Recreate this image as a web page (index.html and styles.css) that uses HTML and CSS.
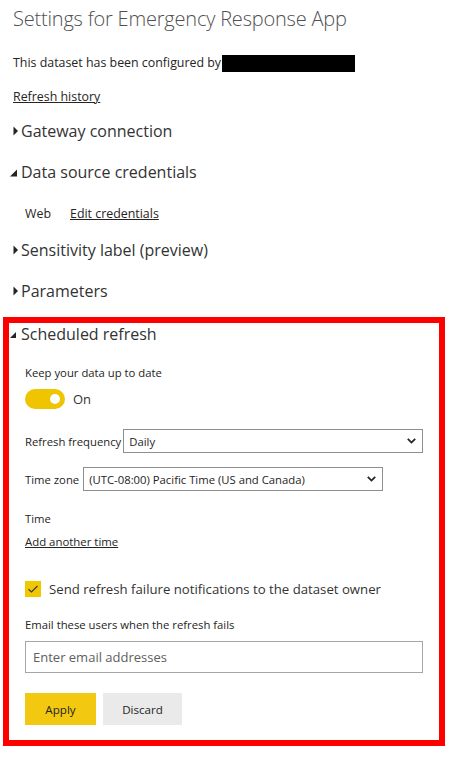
FILE: index.html
```html
<!DOCTYPE html>
<html lang="en">
<head>
<meta charset="utf-8">
<title>Settings for Emergency Response App</title>
<link rel="stylesheet" href="styles.css">
</head>
<body>
<div class="page">
  <h1 class="title">Settings for Emergency Response App</h1>
  <p class="configured">This dataset has been configured by <span class="redacted"></span></p>
  <a class="link history" href="#">Refresh history</a>

  <div class="section-head sh-gateway">
    <span class="caret"><svg width="8" height="10" viewBox="0 0 8 10"><path d="M3.5 0.5 L8 5 L3.5 9.5 Z" fill="#252423"/></svg></span>
    <span>Gateway connection</span>
  </div>

  <div class="section-head sh-source">
    <span class="caret"><svg width="8" height="10" viewBox="0 0 8 10"><path d="M0 9.5 L7 9.5 L7 2.5 Z" fill="#252423"/></svg></span>
    <span>Data source credentials</span>
  </div>
  <div class="cred-row">
    <span class="cred-type">Web</span>
    <a class="link" href="#">Edit credentials</a>
  </div>

  <div class="section-head sh-sens">
    <span class="caret"><svg width="8" height="10" viewBox="0 0 8 10"><path d="M3.5 0.5 L8 5 L3.5 9.5 Z" fill="#252423"/></svg></span>
    <span>Sensitivity label (preview)</span>
  </div>

  <div class="section-head sh-params">
    <span class="caret"><svg width="8" height="10" viewBox="0 0 8 10"><path d="M3.5 0.5 L8 5 L3.5 9.5 Z" fill="#252423"/></svg></span>
    <span>Parameters</span>
  </div>

  <div class="highlight">
    <div class="section-head sh-sched">
      <span class="caret"><svg width="8" height="10" viewBox="0 0 8 10"><path d="M0 9 L6 9 L6 3 Z" fill="#252423"/></svg></span>
      <span>Scheduled refresh</span>
    </div>
    <div class="sched-body">
      <div class="keep">Keep your data up to date</div>
      <div class="toggle-row">
        <span class="toggle"><span class="knob"></span></span>
        <span class="toggle-label">On</span>
      </div>

      <div class="field-row freq">
        <span class="field-label">Refresh frequency</span>
        <span class="select">
          <span class="select-text">Daily</span>
          <svg class="chev" width="9" height="6" viewBox="0 0 9 6"><path d="M0.8 0.9 L4.5 4.6 L8.2 0.9" fill="none" stroke="#252423" stroke-width="1.8"/></svg>
        </span>
      </div>

      <div class="field-row tz">
        <span class="field-label tz-label">Time zone</span>
        <span class="select">
          <span class="select-text">(UTC-08:00) Pacific Time (US and Canada)</span>
          <svg class="chev" width="9" height="6" viewBox="0 0 9 6"><path d="M0.8 0.9 L4.5 4.6 L8.2 0.9" fill="none" stroke="#252423" stroke-width="1.8"/></svg>
        </span>
      </div>

      <div class="time-label">Time</div>
      <a class="link add-time" href="#">Add another time</a>

      <div class="check-row">
        <span class="checkbox"><svg width="16" height="16" viewBox="0 0 16 16"><path d="M3.5 8.3 L6.5 11 L12.5 5" fill="none" stroke="#3b3a39" stroke-width="1.2"/></svg></span>
        <span class="check-label">Send refresh failure notifications to the dataset owner</span>
      </div>

      <div class="email-label">Email these users when the refresh fails</div>
      <div class="email-input">Enter email addresses</div>

      <div class="buttons">
        <span class="btn btn-apply">Apply</span>
        <span class="btn btn-discard">Discard</span>
      </div>
    </div>
  </div>
</div>
</body>
</html>
```

FILE: styles.css
```css
* { box-sizing: border-box; }
html, body { margin: 0; padding: 0; background: #ffffff; }
body {
  font-family: "Open Sans", "Noto Sans", "Liberation Sans", sans-serif;
  color: #252423;
  width: 463px;
}
.page {
  padding: 5px 0 0 0;
}
.title {
  margin: 0 0 0 13px;
  font-weight: 300;
  font-size: 20px;
  line-height: 28px;
  color: #505050;
  letter-spacing: -0.2px;
}
.configured {
  margin: 20px 0 0 13px;
  font-size: 12.4px;
  line-height: 20px;
  display: flex;
  align-items: center;
}
.redacted {
  display: inline-block;
  width: 133px;
  height: 17px;
  background: #000;
  margin-left: 1px;
}
.link {
  color: #252423;
  text-decoration: underline;
  font-size: 12.4px;
  line-height: 20px;
}
.history {
  display: block;
  margin: 14px 0 0 13px;
  width: max-content;
}
.section-head {
  display: flex;
  align-items: center;
  font-size: 16px;
  line-height: 24px;
  color: #333333;
  margin-left: 10px;
}
.caret {
  width: 8px;
  height: 10px;
  margin-right: 3px;
  display: flex;
}
.sh-gateway { margin-top: 12px; }
.sh-source { margin-top: 17px; }
.sh-sens { margin-top: 14px; }
.sh-params { margin-top: 17px; }
.cred-row {
  margin: 20px 0 0 25px;
  font-size: 12.4px;
  line-height: 20px;
  display: flex;
}
.cred-type { width: 45px; }
.highlight {
  margin: 14px 0 0 3px;
  width: 442px;
  border: 6px solid #ff0000;
  padding: 0 0 15px 0;
}
.sh-sched {
  margin: 0 0 0 1px;
  padding-top: 1px;
  line-height: 20px;
}
.sched-body {
  padding-left: 16px;
  font-size: 11.3px;
}
.keep {
  margin-top: 19px;
  line-height: 20px;
}
.toggle-row {
  margin-top: 6px;
  display: flex;
  align-items: center;
  height: 20px;
}
.toggle {
  width: 40px;
  height: 20px;
  border-radius: 10px;
  background: #eec500;
  position: relative;
  display: inline-block;
}
.knob {
  position: absolute;
  right: 5px;
  top: 5px;
  width: 10px;
  height: 10px;
  border-radius: 50%;
  background: #ffffff;
}
.toggle-label {
  margin-left: 8px;
  font-size: 13px;
  color: #333;
}
.field-row {
  display: flex;
  align-items: center;
  height: 24px;
}
.freq { margin-top: 20px; }
.tz { margin-top: 14px; }
.field-label { margin-right: 2px; }
.tz-label { margin-right: 4px; }
.select {
  width: 300px;
  height: 24px;
  border: 1px solid #8f8f8f;
  display: flex;
  align-items: center;
  justify-content: space-between;
  padding: 0 6px 0 5px;
}
.chev { display: block; }
.time-label {
  margin-top: 18px;
  line-height: 20px;
}
.add-time {
  display: block;
  width: max-content;
  margin-top: 3px;
  font-size: 11.4px;
}
.check-row {
  margin-top: 29px;
  display: flex;
  align-items: center;
  height: 16px;
}
.checkbox {
  width: 16px;
  height: 16px;
  background: #f0c800;
  display: flex;
  margin-right: 8px;
}
.check-label {
  font-size: 13.2px;
  color: #333;
}
.email-label {
  margin-top: 20px;
  font-size: 11.3px;
  line-height: 16px;
}
.email-input {
  margin-top: 8px;
  width: 398px;
  height: 32px;
  border: 1px solid #a6a6a6;
  padding: 0 7px;
  font-size: 13px;
  line-height: 30px;
  color: #605e5c;
}
.buttons {
  margin-top: 20px;
  display: flex;
  gap: 7px;
}
.btn {
  height: 32px;
  display: flex;
  align-items: center;
  justify-content: center;
  font-size: 11.6px;
  color: #252423;
}
.btn-apply { width: 71px; background: #f2c811; }
.btn-discard { width: 79px; background: #eaeaea; }
```
